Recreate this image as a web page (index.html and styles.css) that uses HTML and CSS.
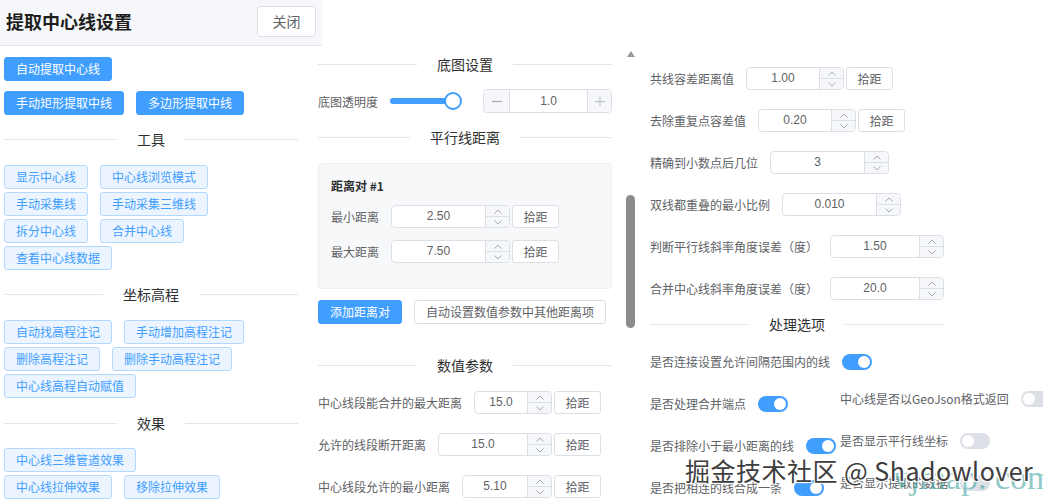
FILE: index.html
```html
<!DOCTYPE html>
<html lang="zh-CN">
<head>
<meta charset="utf-8">
<title>提取中心线设置</title>
<link rel="stylesheet" href="styles.css">
</head>
<body>
<div class="page">
  <header class="dlg-head">
    <h1 class="dlg-title">提取中心线设置</h1>
    <button class="btn btn-close">关闭</button>
  </header>

  <div class="cols">
    <!-- LEFT -->
    <section class="col col-left">
      <div class="btnrow top-first"><button class="btn btn-primary">自动提取中心线</button></div>
      <div class="btnrow top-second"><button class="btn btn-primary">手动矩形提取中线</button><button class="btn btn-primary">多边形提取中线</button></div>

      <div class="divider dv-left"><span>工具</span></div>
      <div class="btngroup">
        <div class="btnrow"><button class="btn btn-plain">显示中心线</button><button class="btn btn-plain">中心线浏览模式</button></div>
        <div class="btnrow"><button class="btn btn-plain">手动采集线</button><button class="btn btn-plain">手动采集三维线</button></div>
        <div class="btnrow"><button class="btn btn-plain">拆分中心线</button><button class="btn btn-plain">合并中心线</button></div>
        <div class="btnrow"><button class="btn btn-plain">查看中心线数据</button></div>
      </div>

      <div class="divider dv-left"><span>坐标高程</span></div>
      <div class="btngroup">
        <div class="btnrow"><button class="btn btn-plain">自动找高程注记</button><button class="btn btn-plain">手动增加高程注记</button></div>
        <div class="btnrow"><button class="btn btn-plain">删除高程注记</button><button class="btn btn-plain">删除手动高程注记</button></div>
        <div class="btnrow"><button class="btn btn-plain">中心线高程自动赋值</button></div>
      </div>

      <div class="divider dv-left dv-fx"><span>效果</span></div>
      <div class="btngroup">
        <div class="btnrow"><button class="btn btn-plain">中心线三维管道效果</button></div>
        <div class="btnrow"><button class="btn btn-plain">中心线拉伸效果</button><button class="btn btn-plain">移除拉伸效果</button></div>
      </div>
    </section>

    <!-- MIDDLE -->
    <section class="col col-mid">
      <div class="divider dv-base"><span>底图设置</span></div>
      <div class="frow slider-row">
        <span class="lbl">底图透明度</span>
        <div class="slider"><span class="slider-thumb"></span></div>
        <div class="num num-pm">
          <span class="pm minus"><svg width="10" height="10" viewBox="0 0 10 10"><line x1="0" y1="5.5" x2="10" y2="5.5" stroke="#a8abb2" stroke-width="1.2"/></svg></span>
          <span class="val">1.0</span>
          <span class="pm plus"><svg width="10" height="10" viewBox="0 0 10 10"><line x1="0" y1="5.5" x2="10" y2="5.5" stroke="#c0c4cc" stroke-width="1.2"/><line x1="5" y1="0.5" x2="5" y2="10.5" stroke="#c0c4cc" stroke-width="1.2"/></svg></span>
        </div>
      </div>

      <div class="divider dv-par"><span>平行线距离</span></div>
      <div class="card">
        <div class="card-title">距离对 #1</div>
        <div class="frow card-row">
          <span class="lbl">最小距离</span>
          <div class="num w119"><span class="val">2.50</span><span class="ctrl"><span class="up"><svg width="8" height="5" viewBox="0 0 8 5"><polyline points="0.5,4.5 4,1 7.5,4.5" fill="none" stroke="#a8abb2" stroke-width="1"/></svg></span><span class="dn"><svg width="8" height="5" viewBox="0 0 8 5"><polyline points="0.5,0.5 4,4 7.5,0.5" fill="none" stroke="#a8abb2" stroke-width="1"/></svg></span></span></div>
          <button class="btn pick">拾距</button>
        </div>
        <div class="frow card-row card-row2">
          <span class="lbl">最大距离</span>
          <div class="num w119"><span class="val">7.50</span><span class="ctrl"><span class="up"><svg width="8" height="5" viewBox="0 0 8 5"><polyline points="0.5,4.5 4,1 7.5,4.5" fill="none" stroke="#a8abb2" stroke-width="1"/></svg></span><span class="dn"><svg width="8" height="5" viewBox="0 0 8 5"><polyline points="0.5,0.5 4,4 7.5,0.5" fill="none" stroke="#a8abb2" stroke-width="1"/></svg></span></span></div>
          <button class="btn pick">拾距</button>
        </div>
      </div>
      <div class="btnrow card-actions"><button class="btn btn-primary">添加距离对</button><button class="btn">自动设置数值参数中其他距离项</button></div>

      <div class="divider dv-num"><span>数值参数</span></div>
      <div class="nrows">
        <div class="frow">
          <span class="lbl">中心线段能合并的最大距离</span>
          <div class="num"><span class="val">15.0</span><span class="ctrl"><span class="up"><svg width="8" height="5" viewBox="0 0 8 5"><polyline points="0.5,4.5 4,1 7.5,4.5" fill="none" stroke="#a8abb2" stroke-width="1"/></svg></span><span class="dn"><svg width="8" height="5" viewBox="0 0 8 5"><polyline points="0.5,0.5 4,4 7.5,0.5" fill="none" stroke="#a8abb2" stroke-width="1"/></svg></span></span></div>
          <button class="btn pick">拾距</button>
        </div>
        <div class="frow">
          <span class="lbl">允许的线段断开距离</span>
          <div class="num"><span class="val">15.0</span><span class="ctrl"><span class="up"><svg width="8" height="5" viewBox="0 0 8 5"><polyline points="0.5,4.5 4,1 7.5,4.5" fill="none" stroke="#a8abb2" stroke-width="1"/></svg></span><span class="dn"><svg width="8" height="5" viewBox="0 0 8 5"><polyline points="0.5,0.5 4,4 7.5,0.5" fill="none" stroke="#a8abb2" stroke-width="1"/></svg></span></span></div>
          <button class="btn pick">拾距</button>
        </div>
        <div class="frow">
          <span class="lbl">中心线段允许的最小距离</span>
          <div class="num"><span class="val">5.10</span><span class="ctrl"><span class="up"><svg width="8" height="5" viewBox="0 0 8 5"><polyline points="0.5,4.5 4,1 7.5,4.5" fill="none" stroke="#a8abb2" stroke-width="1"/></svg></span><span class="dn"><svg width="8" height="5" viewBox="0 0 8 5"><polyline points="0.5,0.5 4,4 7.5,0.5" fill="none" stroke="#a8abb2" stroke-width="1"/></svg></span></span></div>
          <button class="btn pick">拾距</button>
        </div>
      </div>
    </section>

    <!-- SCROLLBAR -->
    <div class="vscroll">
      <span class="vs-arrow"></span>
      <span class="vs-thumb"></span>
    </div>

    <!-- RIGHT -->
    <section class="col col-right">
      <div class="rrows">
        <div class="frow">
          <span class="lbl">共线容差距离值</span>
          <div class="num w98"><span class="val">1.00</span><span class="ctrl"><span class="up"><svg width="8" height="5" viewBox="0 0 8 5"><polyline points="0.5,4.5 4,1 7.5,4.5" fill="none" stroke="#a8abb2" stroke-width="1"/></svg></span><span class="dn"><svg width="8" height="5" viewBox="0 0 8 5"><polyline points="0.5,0.5 4,4 7.5,0.5" fill="none" stroke="#a8abb2" stroke-width="1"/></svg></span></span></div>
          <button class="btn pick">拾距</button>
        </div>
        <div class="frow">
          <span class="lbl">去除重复点容差值</span>
          <div class="num w98"><span class="val">0.20</span><span class="ctrl"><span class="up"><svg width="8" height="5" viewBox="0 0 8 5"><polyline points="0.5,4.5 4,1 7.5,4.5" fill="none" stroke="#a8abb2" stroke-width="1"/></svg></span><span class="dn"><svg width="8" height="5" viewBox="0 0 8 5"><polyline points="0.5,0.5 4,4 7.5,0.5" fill="none" stroke="#a8abb2" stroke-width="1"/></svg></span></span></div>
          <button class="btn pick">拾距</button>
        </div>
        <div class="frow">
          <span class="lbl">精确到小数点后几位</span>
          <div class="num w119"><span class="val">3</span><span class="ctrl"><span class="up"><svg width="8" height="5" viewBox="0 0 8 5"><polyline points="0.5,4.5 4,1 7.5,4.5" fill="none" stroke="#a8abb2" stroke-width="1"/></svg></span><span class="dn"><svg width="8" height="5" viewBox="0 0 8 5"><polyline points="0.5,0.5 4,4 7.5,0.5" fill="none" stroke="#a8abb2" stroke-width="1"/></svg></span></span></div>
        </div>
        <div class="frow">
          <span class="lbl">双线都重叠的最小比例</span>
          <div class="num w119"><span class="val">0.010</span><span class="ctrl"><span class="up"><svg width="8" height="5" viewBox="0 0 8 5"><polyline points="0.5,4.5 4,1 7.5,4.5" fill="none" stroke="#a8abb2" stroke-width="1"/></svg></span><span class="dn"><svg width="8" height="5" viewBox="0 0 8 5"><polyline points="0.5,0.5 4,4 7.5,0.5" fill="none" stroke="#a8abb2" stroke-width="1"/></svg></span></span></div>
        </div>
        <div class="frow">
          <span class="lbl">判断平行线斜率角度误差（度）</span>
          <div class="num w119"><span class="val">1.50</span><span class="ctrl"><span class="up"><svg width="8" height="5" viewBox="0 0 8 5"><polyline points="0.5,4.5 4,1 7.5,4.5" fill="none" stroke="#a8abb2" stroke-width="1"/></svg></span><span class="dn"><svg width="8" height="5" viewBox="0 0 8 5"><polyline points="0.5,0.5 4,4 7.5,0.5" fill="none" stroke="#a8abb2" stroke-width="1"/></svg></span></span></div>
        </div>
        <div class="frow">
          <span class="lbl">合并中心线斜率角度误差（度）</span>
          <div class="num w119"><span class="val">20.0</span><span class="ctrl"><span class="up"><svg width="8" height="5" viewBox="0 0 8 5"><polyline points="0.5,4.5 4,1 7.5,4.5" fill="none" stroke="#a8abb2" stroke-width="1"/></svg></span><span class="dn"><svg width="8" height="5" viewBox="0 0 8 5"><polyline points="0.5,0.5 4,4 7.5,0.5" fill="none" stroke="#a8abb2" stroke-width="1"/></svg></span></span></div>
        </div>
      </div>

      <div class="divider dv-opt"><span>处理选项</span></div>
      <div class="frow trow-first">
        <span class="lbl">是否连接设置允许间隔范围内的线</span><span class="switch on"></span>
      </div>
      <div class="tgrid">
        <div class="tcol tcol-a">
          <div class="frow"><span class="lbl">是否处理合并端点</span><span class="switch on"></span></div>
          <div class="frow"><span class="lbl">是否排除小于最小距离的线</span><span class="switch on"></span></div>
          <div class="frow"><span class="lbl">是否把相连的线合成一条</span><span class="switch on"></span></div>
        </div>
        <div class="tcol tcol-b">
          <div class="frow"><span class="lbl">中心线是否以GeoJson格式返回</span><span class="switch"></span></div>
          <div class="frow"><span class="lbl">是否显示平行线坐标</span><span class="switch"></span></div>
          <div class="frow"><span class="lbl">是否显示提取的数据</span><span class="switch"></span></div>
        </div>
      </div>
    </section>
  </div>

  <div class="wm-site">vjmap. com</div>
  <div class="wm-main">掘金技术社区 @ Shadowlover</div>
</div>
</body>
</html>
```

FILE: styles.css
```css
* { box-sizing: border-box; }
html, body { margin: 0; padding: 0; }
body {
  width: 1043px;
  height: 504px;
  overflow: hidden;
  background: #ffffff;
  font-family: "Noto Sans CJK SC", "Noto Sans", sans-serif;
  font-size: 12px;
  color: #606266;
}
.page { position: relative; width: 1043px; height: 504px; overflow: hidden; }

/* header */
.dlg-head {
  width: 322px;
  height: 46px;
  display: flex;
  align-items: center;
  justify-content: space-between;
  padding: 0 6px 3px 6px;
  background: #f5f7fa;
  border-bottom: 1px solid #e4e7ed;
}
.dlg-title {
  margin: 0;
  font-size: 18px;
  font-weight: 700;
  color: #1f1f1f;
  line-height: 24px;
}

/* buttons */
.btn {
  height: 24px;
  margin: 0;
  padding: 0 11px;
  border: 1px solid #dcdfe6;
  border-radius: 3px;
  background: #ffffff;
  font-family: "Noto Sans CJK SC", "Noto Sans", sans-serif;
  font-size: 12px;
  line-height: 22px;
  color: #606266;
  white-space: nowrap;
  flex: none;
}
.btn-close {
  width: 59px;
  height: 31px;
  padding: 0;
  border-radius: 4px;
  font-size: 14px;
  line-height: 29px;
}
.btn-primary { background: #409eff; border-color: #409eff; color: #ffffff; }
.btn-plain { background: #ecf5ff; border-color: #b3d8ff; color: #409eff; }
.pick { width: 47px; height: 23px; padding: 0; margin-left: 2px; line-height: 21px; }

.btnrow { display: flex; gap: 12px; }
.btngroup { display: flex; flex-direction: column; gap: 3px; }
.top-first { margin-top: 11px; }
.top-second { margin-top: 10px; }

/* layout */
.cols { display: flex; align-items: flex-start; padding-left: 4px; }
.col-left { width: 294px; margin-right: 20px; flex: none; }
.col-mid { width: 294px; flex: none; }
.col-right { width: 294px; flex: none; }
.vscroll {
  width: 38px;
  flex: none;
  display: flex;
  flex-direction: column;
  align-items: flex-start;
  padding-left: 14px;
}
.vs-arrow {
  width: 0; height: 0;
  margin-top: 5px;
  margin-left: 0.5px;
  border-left: 4px solid transparent;
  border-right: 4px solid transparent;
  border-bottom: 6px solid #9a9a9a;
}
.vs-thumb {
  width: 9px;
  height: 133px;
  margin-top: 138px;
  border-radius: 4.5px;
  background: #8c8c8c;
}

/* divider */
.divider {
  display: flex;
  align-items: center;
  height: 20px;
  font-size: 14px;
  color: #303133;
  white-space: nowrap;
}
.divider::before, .divider::after {
  content: "";
  flex: 1;
  height: 1px;
  background: #e2e5ea;
}
.divider span { padding: 0 20px; line-height: 20px; }
.dv-left { margin: 14px 0 16px; }
.dv-fx { margin: 15px 0 15px; }
.dv-base { margin-top: 8px; }
.dv-par { margin-top: 14px; }
.dv-num { margin-top: 31px; }
.dv-opt { margin-top: 14px; }

/* form rows */
.frow { display: flex; align-items: center; height: 23px; }
.lbl { margin-right: 12px; white-space: nowrap; flex: none; font-size: 12px; color: #606266; }

/* number input */
.num {
  display: flex;
  height: 23px;
  border: 1px solid #dcdfe6;
  border-radius: 4px;
  background: #ffffff;
  flex: 0 1 auto;
  min-width: 0;
}
.num .val {
  flex: 1;
  text-align: center;
  line-height: 21px;
  font-family: "Liberation Sans", "Noto Sans", sans-serif;
  font-size: 12px;
  color: #606266;
}
.num .ctrl {
  width: 24px;
  flex: none;
  display: flex;
  flex-direction: column;
  border-left: 1px solid #dcdfe6;
  background: #f5f7fa;
  border-radius: 0 3px 3px 0;
}
.num .ctrl span { flex: 1; display: flex; align-items: center; justify-content: center; }
.num .ctrl .dn { border-top: 1px solid #dcdfe6; }
.w98 { width: 98px; }
.w119 { width: 119px; }

.num-pm { flex: 1 1 auto; height: 24px; }
.num-pm .val { line-height: 22px; }
.pm {
  width: 26px;
  flex: none;
  display: flex;
  align-items: center;
  justify-content: center;
  background: #f5f7fa;
}
.pm.minus { border-right: 1px solid #dcdfe6; border-radius: 3px 0 0 3px; }
.pm.plus { width: 24px; border-left: 1px solid #dcdfe6; border-radius: 0 3px 3px 0; }

/* slider */
.slider-row { margin-top: 15px; height: 24px; }
.slider {
  position: relative;
  width: 63px;
  height: 6px;
  margin-right: 30px;
  border-radius: 3px;
  background: #409eff;
  flex: none;
}
.slider-thumb {
  position: absolute;
  right: -9px;
  top: -6px;
  width: 18px;
  height: 18px;
  border: 2px solid #409eff;
  border-radius: 50%;
  background: #ffffff;
}

/* card */
.card {
  margin-top: 16px;
  padding: 14px 12px 25px;
  background: #f7f8fa;
  border: 1px solid #ebeef5;
  border-radius: 4px;
}
.card-title { font-size: 12px; font-weight: 700; color: #303133; line-height: 16px; }
.card-row { margin-top: 11px; }
.card-row2 { margin-top: 12px; }
.card-actions { margin-top: 11px; }

.nrows { width: 283px; display: flex; flex-direction: column; gap: 19px; margin-top: 16px; }
.nrows .num { flex: 1 1 0; }

.rrows { display: flex; flex-direction: column; gap: 19px; margin-top: 21px; }

/* switches */
.trow-first { margin-top: 16px; }
.tgrid { display: flex; margin-top: 19px; }
.tcol { display: flex; flex-direction: column; gap: 19px; flex: none; }
.tcol-a { width: 190px; }
.tcol-b { margin-top: -5px; }
.switch {
  position: relative;
  width: 30px;
  height: 16px;
  border-radius: 8px;
  background: #dcdfe6;
  flex: none;
}
.switch::after {
  content: "";
  position: absolute;
  top: 2px;
  left: 2px;
  width: 12px;
  height: 12px;
  border-radius: 50%;
  background: #ffffff;
}
.switch.on { background: #409eff; }
.switch.on::after { left: 16px; }

/* watermarks */
.wm-site {
  position: absolute;
  left: 893px;
  top: 461px;
  font-family: "Liberation Serif", serif;
  font-size: 34px;
  line-height: 34px;
  color: rgba(70, 165, 165, 0.6);
  white-space: nowrap;
}
.wm-main {
  position: absolute;
  left: 685px;
  top: 457px;
  font-family: "Noto Sans CJK SC", "Noto Sans", sans-serif;
  font-size: 25px;
  line-height: 27px;
  letter-spacing: 0.5px;
  color: #3d3d3d;
  white-space: nowrap;
  text-shadow: -1px -1px 0 #fff, 1px -1px 0 #fff, -1px 1px 0 #fff, 1px 1px 0 #fff, 0 0 3px #fff;
}
```
